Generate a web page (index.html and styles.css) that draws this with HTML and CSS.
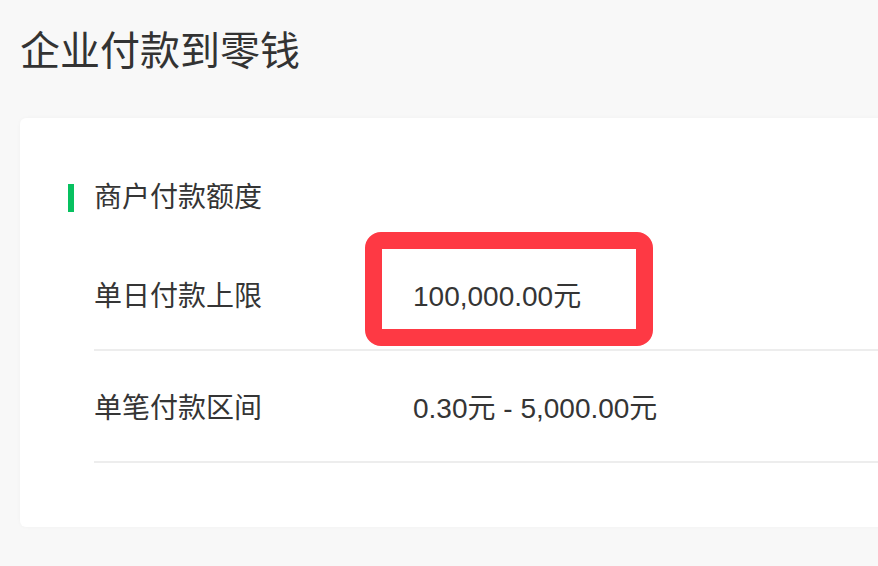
FILE: index.html
```html
<!DOCTYPE html>
<html lang="zh">
<head>
<meta charset="utf-8">
<title>企业付款到零钱</title>
<link rel="stylesheet" href="styles.css">
</head>
<body>
<div class="page">
  <h1 class="title">企业付款到零钱</h1>
  <div class="card">
    <div class="section-head"><span class="bar"></span><span class="section-title">商户付款额度</span></div>
    <div class="row">
      <div class="label">单日付款上限</div>
      <div class="value">100,000.00元</div>
      <div class="highlight"></div>
    </div>
    <div class="row">
      <div class="label">单笔付款区间</div>
      <div class="value">0.30元 - 5,000.00元</div>
    </div>
  </div>
</div>
</body>
</html>
```
FILE: styles.css
```css
html, body {
  margin: 0;
  padding: 0;
  background: #f8f8f8;
  overflow: hidden;
}
.page {
  width: 878px;
  height: 566px;
  overflow: hidden;
  padding-left: 20px;
  box-sizing: border-box;
  font-family: "Liberation Sans", "Noto Sans CJK SC", sans-serif;
  color: #353535;
}
.title {
  margin: 0;
  padding-top: 24px;
  font-size: 40px;
  line-height: 54px;
  font-weight: normal;
  color: #333;
  height: 96px;
  box-sizing: border-box;
}
.card {
  background: #fff;
  border-radius: 6px;
  width: 1000px;
  margin-top: 22px;
  padding: 60px 0 64px 0;
  box-shadow: 0 0 4px rgba(0,0,0,0.03);
}
.section-head {
  display: flex;
  align-items: center;
  padding-left: 48px;
  height: 40px;
  margin-bottom: 21px;
}
.bar {
  width: 6px;
  height: 28px;
  background: #07c160;
  margin-right: 20px;
}
.section-title {
  font-size: 28px;
  line-height: 40px;
}
.row {
  position: relative;
  display: flex;
  align-items: center;
  margin-left: 74px;
  height: 110px;
  border-bottom: 2px solid #ededed;
  font-size: 28px;
}
.label {
  width: 319px;
}
.value {
  font-size: 28px;
}
.highlight {
  position: absolute;
  left: 271px;
  top: -7px;
  width: 288px;
  height: 114px;
  box-sizing: border-box;
  border: 17px solid #fe3944;
  border-radius: 16px;
}
```
